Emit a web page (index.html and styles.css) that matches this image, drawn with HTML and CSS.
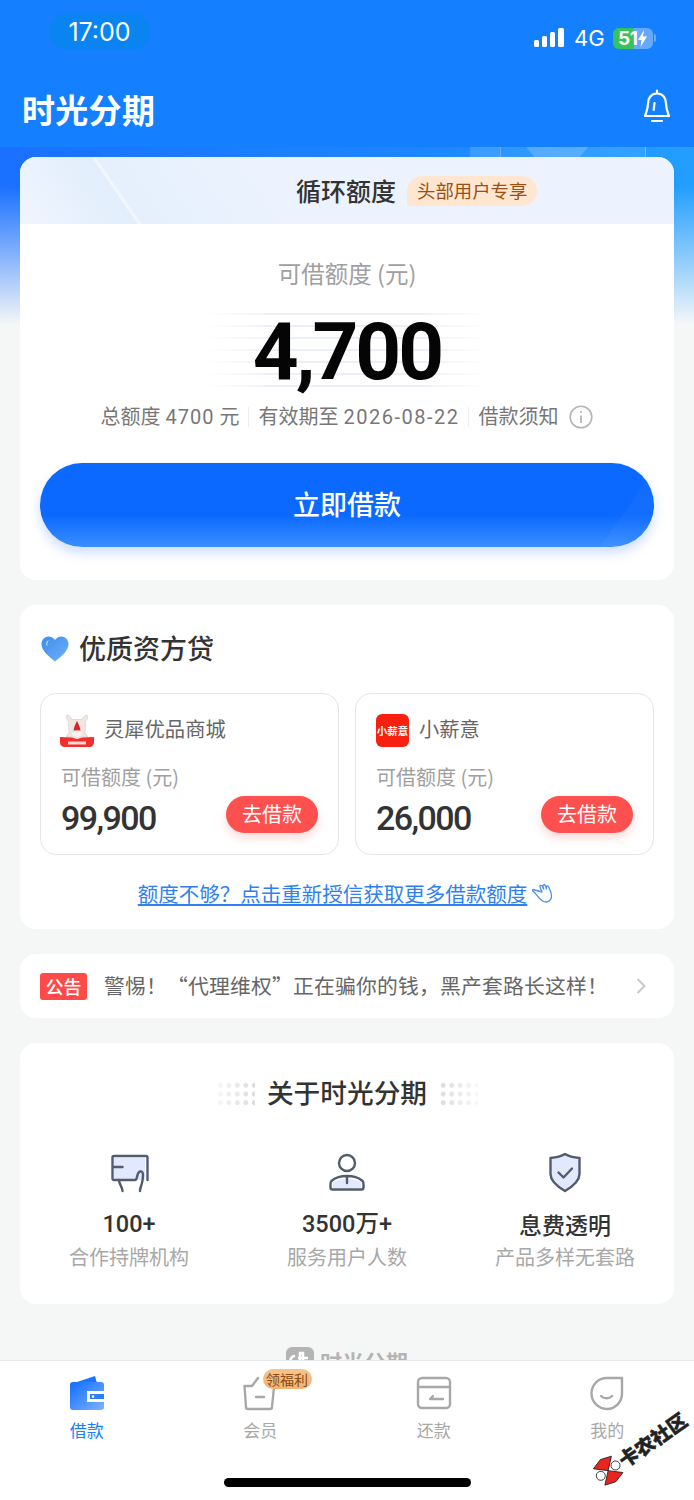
FILE: index.html
```html
<!DOCTYPE html>
<html lang="zh-CN">
<head>
<meta charset="utf-8">
<title>时光分期</title>
<link rel="stylesheet" href="styles.css">
</head>
<body>
<div class="page">
  <div class="backdrop">
    <svg class="backdrop-art" width="180" height="12" viewBox="0 0 180 12"><rect x="0" width="30" height="12" fill="#fff" opacity=".14"/><rect x="30" width="1" height="12" fill="#fff" opacity=".3"/><rect x="31" width="145" height="12" fill="#fff" opacity=".08"/><path d="M56 0h62l-10 12H66z" fill="#fff" opacity=".18"/><rect x="175" width="1" height="12" fill="#fff" opacity=".3"/></svg>
  </div>
  <header class="header">
    <div class="status">
      <div class="time">17:00</div>
      <div class="status-right">
        <svg class="signal" width="30" height="20" viewBox="0 0 30 20"><rect x="0" y="12" width="5" height="7" rx="1.5"/><rect x="8" y="8" width="5" height="11" rx="1.5"/><rect x="16" y="4" width="5" height="15" rx="1.5"/><rect x="24" y="0" width="6" height="19" rx="1.5"/></svg>
        <span class="net">4G</span>
        <div class="battery"><span class="battery-num">51</span><svg class="bolt" width="11" height="17" viewBox="0 0 11 17"><path d="M7 0 1 10h3.500L3.500 17 10 6.500H6z" fill="#fff"/></svg></div>
        <span class="battery-cap"></span>
      </div>
    </div>
    <div class="titlebar">
      <div class="brand">时光分期</div>
      <svg class="bell" width="30" height="34" viewBox="0 0 30 34" fill="none" stroke="#fff" stroke-width="2.200" stroke-linecap="round" stroke-linejoin="round"><path d="M15 1.500v3M15 4.500c-6 0-9 4.500-9 10 0 5-1.500 8-3 12.500h24c-1.500-4.500-3-7.500-3-12.500 0-5.500-3-10-9-10z"/><path d="M10 32h10M12.500 14l-.8 7"/></svg>
    </div>
  </header>

  <main class="main">
    <section class="card quota">
      <div class="quota-head">
        <h2 class="quota-title">循环额度</h2>
        <span class="quota-tag">头部用户专享</span>
      </div>
      <div class="quota-body">
        <div class="quota-label">可借额度 (元)</div>
        <div class="amount"><span class="amount-num">4,700</span></div>
        <div class="meta">
          <span>总额度 <b class="num num-a">4700</b> 元</span><i class="sep"></i><span>有效期至 <b class="num num-b">2026-08-22</b></span><i class="sep"></i><span>借款须知</span>
          <svg class="info" width="24" height="24" viewBox="0 0 24 24" fill="none" stroke="#b5b5b5"><circle cx="12" cy="12" r="10.800" stroke-width="1.600"/><path d="M12 10.500V18" stroke-width="1.800"/><circle cx="12" cy="7" r="1.100" fill="#b5b5b5" stroke="none"/></svg>
        </div>
        <button class="cta">立即借款</button>
      </div>
    </section>

    <section class="card funds">
      <h2 class="funds-title">
        <svg width="28" height="26" viewBox="0 0 28 26"><defs><linearGradient id="hg" x1="0" y1="0" x2="1" y2="1"><stop offset="0" stop-color="#3d8df0"/><stop offset="1" stop-color="#6fb0f5"/></linearGradient></defs><path d="M14 25.500C9 21 .5 15.500.5 8 .5 3.500 4 .5 7.500.5c2.800 0 5 1.300 6.500 3.500C15.500 1.800 17.700.5 20.500.5 24 .5 27.500 3.500 27.500 8c0 7.500-8.500 13-13.500 17.500z" fill="url(#hg)"/><path d="M8 4C5.500 5 4.500 8 6.500 10.500 5.800 8 6.200 5.500 8 4z" fill="#fff"/></svg>
        <span>优质资方贷</span>
      </h2>
      <div class="offers">
        <article class="offer">
          <div class="offer-name">
            <svg class="logo" width="34" height="34" viewBox="0 0 34 34"><path d="M7 2c2 0 4 2 5 4.500h10C23 4 25 2 27 2c1 2 .5 5-2 7 .8 4 .5 8-.5 11 2 1 3 2.500 3 4H6.500c0-1.500 1-3 3-4-1-3-1.300-7-.5-11C6.500 7 6 4 7 2z" fill="#efe7e0" stroke="#d4c8bf" stroke-width=".6"/><path d="M17 8c1.500 3 3 6 3.500 9.500h-7C14 14 15.500 11 17 8z" fill="#d8232a"/><ellipse cx="17" cy="21" rx="6" ry="3.200" fill="#f9f3ee" stroke="#ddd2ca" stroke-width=".5"/><path d="M0 24c4 0 8 .5 12 .5l5 1.500 5-1.500c4 0 8-.5 12-.5v5.500a4.500 4.500 0 0 1-4.500 4.500h-25A4.500 4.500 0 0 1 0 29.500z" fill="#f1302c"/><rect x="8" y="28.500" width="18" height="3" fill="#fff" opacity=".8"/></svg>
            <span>灵犀优品商城</span>
          </div>
          <div class="offer-label">可借额度 (元)</div>
          <div class="offer-row"><span class="offer-value">99,900</span><button class="go">去借款</button></div>
        </article>
        <article class="offer">
          <div class="offer-name">
            <div class="logo logo-red">小薪意</div>
            <span>小薪意</span>
          </div>
          <div class="offer-label">可借额度 (元)</div>
          <div class="offer-row"><span class="offer-value">26,000</span><button class="go">去借款</button></div>
        </article>
      </div>
      <div class="more">
        <a class="more-link">额度不够&#xFF1F;点击重新授信获取更多借款额度</a>
        <svg width="24" height="20" viewBox="0 0 24 20" fill="none" stroke="#4a90f0" stroke-width="1.300" stroke-linecap="round" stroke-linejoin="round"><path d="M1 6.500l9 2.500-2-5c-.6-1.500 1.500-2.300 2.300-.8l1.500 3-.8-3c-.3-1.500 1.700-2 2.300-.6l1.300 3.400-.3-2c0-1.400 1.800-1.500 2.300-.2l1.700 4c1.200 3 2 6 .3 8.500-1.500 2.500-5 3.500-7.500 2-2-1.200-5-4.500-7-7L2 9c-1.300-.6-2-1.800-1-2.500z"/></svg>
      </div>
    </section>

    <section class="card notice">
      <span class="notice-tag">公告</span>
      <p class="notice-text">警惕&#xFF01;“代理维权”正在骗你的钱&#xFF0C;黑产套路长这样&#xFF01;</p>
      <svg width="11" height="18" viewBox="0 0 11 18" fill="none" stroke="#c9c9c9" stroke-width="2"><path d="M1.500 2l7 7-7 7"/></svg>
    </section>

    <section class="card about">
      <div class="about-head">
        <i class="dots dots-l"></i>
        <h2 class="about-title">关于时光分期</h2>
        <i class="dots dots-r"></i>
      </div>
      <div class="stats">
        <div class="stat">
          <svg width="42" height="42" viewBox="0 0 42 42" fill="none" stroke="#525c6c" stroke-width="2.400" stroke-linecap="round" stroke-linejoin="round"><rect x="6" y="6" width="31" height="22" fill="#e2e8fd" stroke="none"/><path d="M4.500 15V5.500a1.500 1.500 0 0 1 1.500-1.500h32a1.500 1.500 0 0 1 1.500 1.500V28M4.500 15h10M4.500 15v11.500A1.500 1.500 0 0 0 6 28h21c1 0 1.500-.5 2-3 .5-2.500 1-5 3-5.500 2-.5 3 1 3 3.500 0 3-.5 6-1 8-.7 3-2 5-2 8"/><path d="M11 28c0 4 3 6 3.500 11"/></svg>
          <div class="stat-value">100+</div>
          <div class="stat-label">合作持牌机构</div>
        </div>
        <div class="stat">
          <svg width="42" height="42" viewBox="0 0 42 42" fill="none" stroke="#525c6c" stroke-width="2.400" stroke-linecap="round" stroke-linejoin="round"><path d="M7 30c3-1.500 7-3 14-3s11 1.500 14 3v6H7z" fill="#e2e8fd" stroke="none"/><ellipse cx="21" cy="11" rx="8" ry="8"/><path d="M21 24c-6 0-12 2-15 4.500-1.300 1-1.500 2-1.500 3.500v3.500a2 2 0 0 0 2 2h29a2 2 0 0 0 2-2V32c0-1.500-.2-2.500-1.500-3.500C33 26 27 24 21 24zM21 24v7"/></svg>
          <div class="stat-value">3500万+</div>
          <div class="stat-label">服务用户人数</div>
        </div>
        <div class="stat">
          <svg width="42" height="42" viewBox="0 0 42 42" fill="none" stroke="#525c6c" stroke-width="2.400" stroke-linecap="round" stroke-linejoin="round"><path d="M21 2c4 2.500 9 3.500 14.500 4v16c0 7-6 12-14.500 17C12.500 34 6.500 29 6.500 22V6C12 5.500 17 4.500 21 2z" fill="#e2e8fd"/><path d="M14.500 20.500l5 5 8.500-9"/></svg>
          <div class="stat-value stat-value-cjk">息费透明</div>
          <div class="stat-label">产品多样无套路</div>
        </div>
      </div>
    </section>

    <div class="foot-brand">
      <svg width="28" height="28" viewBox="0 0 28 28"><rect width="28" height="28" rx="6" fill="#b4b4b4"/><path d="M9 9c-3 0-5 3-5 6s2 6 5 6 5-3 5-6V6h3v14M12 11h10" fill="none" stroke="#fff" stroke-width="2.500"/></svg>
      <span>时光分期</span>
    </div>
  </main>

  <nav class="tabbar">
    <div class="tab tab-active">
      <svg width="36" height="36" viewBox="0 0 36 36"><defs><linearGradient id="wg" x1="0" y1="0" x2="1" y2="1"><stop offset="0" stop-color="#0f6dff"/><stop offset="1" stop-color="#7db2ff"/></linearGradient></defs><path d="M2 9 26 1l2 7z" fill="#1a76ff"/><rect x="1" y="7" width="34" height="28" rx="3" fill="url(#wg)"/><rect x="18" y="16" width="17" height="11" fill="#fff"/><rect x="21" y="19" width="14" height="5" fill="#2a7fff"/><circle cx="24" cy="21.500" r="1.300" fill="#fff"/></svg>
      <span>借款</span>
    </div>
    <div class="tab">
      <svg width="36" height="36" viewBox="0 0 36 36" fill="none" stroke="#a8a8a8" stroke-width="2.400" stroke-linecap="round" stroke-linejoin="round"><path d="M2.500 11 4 32a2 2 0 0 0 2 2h22a2 2 0 0 0 2-2l2-20M2.500 11H10l6-8M14 22h8"/></svg>
      <span>会员</span>
      <em class="badge">领福利</em>
    </div>
    <div class="tab">
      <svg width="36" height="36" viewBox="0 0 36 36" fill="none" stroke="#a8a8a8" stroke-width="2.400" stroke-linecap="round" stroke-linejoin="round"><rect x="2" y="3" width="32" height="30" rx="4"/><path d="M2 12h32M17 21l-3 3h13"/></svg>
      <span>还款</span>
    </div>
    <div class="tab">
      <svg width="36" height="36" viewBox="0 0 36 36" fill="none" stroke="#a8a8a8" stroke-width="2.400" stroke-linecap="round" stroke-linejoin="round"><path d="M33 3H18C9 3 2.500 10 2.500 18.500S9.500 34 18 34s15-7 15-15.500z"/><path d="M12 21c3 3 8 3 11 0"/></svg>
      <span>我的</span>
    </div>
  </nav>
  <div class="home-bar"></div>
  <div class="watermark">
    <svg width="28" height="28" viewBox="0 0 28 28" stroke="#222" stroke-width=".8"><circle cx="5" cy="14" r="4.500" fill="#fff"/><circle cx="23" cy="14" r="4.500" fill="#fff"/><path d="M14 14 3 4 14 .5 25 4z" fill="#e8261f"/><path d="M14 14 3 24l11 3.500L25 24z" fill="#e8261f"/></svg>
    <span>卡农社区</span>
  </div>
</div>
</body>
</html>
```
FILE: styles.css
```css
* { box-sizing: border-box; margin: 0; padding: 0; }
html, body { width: 694px; height: 1500px; overflow: hidden; }
body { font-family: "Noto Sans CJK SC", sans-serif; color: #333; background: #f5f7f7; }
.page { position: relative; width: 694px; height: 1500px; overflow: hidden; background: #f5f7f7; }
i, em { font-style: normal; }
b { font-weight: 400; }
button { border: 0; font-family: inherit; }

.backdrop { position: absolute; left: 0; right: 0; top: 147px; height: 178px;
  background: linear-gradient(180deg, rgba(245,247,248,0) 0%, rgba(245,247,248,0) 22%, rgba(245,247,248,.5) 62%, #f5f7f7 100%), linear-gradient(90deg, #1a70ff 0%, #1c86ff 60%, #229fff 100%); }
.backdrop-art { position: absolute; left: 470px; top: 0; }

.header { position: relative; height: 147px; background: #1580ff; }
.status { display: flex; justify-content: space-between; align-items: flex-start; padding: 13px 38px 0 49px; height: 84px; }
.time { width: 101px; height: 37px; border-radius: 19px; background: #0a84f0; color: #fff; font: 400 25px/38px Inter, Roboto, sans-serif; text-align: center; }
.status-right { display: flex; align-items: center; margin-top: 14px; height: 22px; }
.signal { fill: #fff; margin-right: 10px; }
.net { color: #fff; font: 400 22px/22px Inter, Roboto, sans-serif; width: 39px; }
.battery { position: relative; display: flex; align-items: center; width: 40px; height: 21px; border-radius: 6px; background: linear-gradient(90deg, #35c35f 0 53%, #66a8fa 53%); }
.battery-num { color: #fff; font: 700 19px/21px Inter, Roboto, sans-serif; margin-left: 5px; letter-spacing: -.5px; }
.battery-cap { width: 2px; height: 8px; margin-left: 1px; border-radius: 0 2px 2px 0; background: #66a8fa; }
.titlebar { display: flex; justify-content: space-between; align-items: center; padding: 0 22px; height: 46px; }
.brand { color: #fff; font-size: 33px; font-weight: 700; line-height: 46px; letter-spacing: .3px; padding-top: 3px; }
.bell { margin-top: -2px; }

.main { position: relative; padding: 10px 20px 0; display: flex; flex-direction: column; gap: 25px; }
.card { background: #fff; border-radius: 16px; }

.quota { height: 423px; overflow: hidden; }
.quota-head { height: 67px; display: flex; align-items: center; gap: 11px; padding-left: 276px;
  background: linear-gradient(55.500deg, #eff5fe 0, #e2eefc 96px, #f4f8fe 98.500px, #e6f0fd 101px, #e8f1fd 160px, #ecf3fe 240px); }
.quota-title { font-size: 25px; font-weight: 500; line-height: 34px; color: #333; white-space: nowrap; padding-bottom: 2px; }
.quota-tag { height: 30px; padding: 0 10px 2px; border-radius: 15px 15px 15px 0; background: #fee6d0; color: #9a5014; font-size: 18.400px; line-height: 28px; white-space: nowrap; }
.quota-body { padding: 34px 20px 33px; text-align: center; }
.quota-label { font-size: 23.500px; line-height: 30px; height: 32px; color: #a0a0a0; }
.amount { position: relative; margin-top: 21px; height: 80px; text-align: center; }
.amount::before { content: ""; position: absolute; left: 165px; width: 284px; top: 2px; height: 74px;
  background: repeating-linear-gradient(180deg, #eceff7 0 2px, transparent 2px 12px);
  -webkit-mask-image: linear-gradient(90deg, transparent, #000 25%, #000 75%, transparent);
  mask-image: linear-gradient(90deg, transparent, #000 25%, #000 75%, transparent); }
.amount-num { position: relative; top: 1px; font: 700 80px/80px Roboto, sans-serif; color: #050505; letter-spacing: -3px; }
.meta { display: flex; align-items: center; justify-content: center; margin-top: 12px; height: 28px; font-family: Roboto, "Noto Sans CJK SC", sans-serif; font-size: 20px; line-height: 28px; color: #777; white-space: nowrap; }
.num-a { letter-spacing: 1px; }
.num-b { letter-spacing: 1.500px; }
.sep { width: 1px; height: 20px; background: #eee; margin: 0 9px; }
.info { margin-left: 11px; }
.cta { display: block; width: 100%; height: 84px; margin-top: 32px; padding-bottom: 4px; border-radius: 42px; color: #fff; font-size: 27px; font-weight: 500; background: linear-gradient(125deg, transparent 92%, rgba(255,255,255,.03) 92%), linear-gradient(180deg, #0b69ff 0 62%, #3a8eff 100%); box-shadow: 0 6px 12px rgba(30,105,255,.22); }

.funds { padding: 28px 20px 22px; }
.funds-title { display: flex; align-items: center; gap: 10px; height: 32px; font-size: 27px; font-weight: 500; line-height: 32px; color: #333; margin-left: 1px; }
.funds-title span { margin-top: -2px; }
.offers { display: grid; grid-template-columns: 299px 299px; gap: 16px; margin-top: 28px; }
.offer { height: 162px; padding: 19px 20px 0 19px; border: 1px solid #e6e6e6; border-radius: 16px; }
.offer-name { display: flex; align-items: center; gap: 10px; height: 34px; font-size: 20.300px; color: #666; }
.offer-name span { margin-top: -5px; }
.logo { flex: none; }
.logo-red { width: 33px; height: 33px; margin-left: 1px; border-radius: 6px; background: #f8200e; color: #fff; font-size: 10.500px; font-weight: 700; line-height: 33px; text-align: center; white-space: nowrap; }
.offer-label { margin: 16px 0 0 1px; font-size: 20px; line-height: 28px; color: #a0a0a0; }
.offer-row { display: flex; justify-content: space-between; align-items: center; margin-top: 5px; height: 37px; }
.offer-value { font: 500 34px/44px Roboto, sans-serif; color: #333; letter-spacing: -1.600px; margin: 7px 0 0 1px; }
.go { width: 92px; height: 37px; padding-bottom: 2px; border-radius: 19px; background: #ff5050; color: #fff; font-size: 20px; line-height: 35px; box-shadow: 0 5px 10px rgba(255,80,80,.22); }
.more { display: flex; align-items: center; justify-content: center; gap: 5px; margin-top: 24px; height: 28px; }
.more-link { font-size: 20.500px; line-height: 28px; color: #2f80f0; text-decoration: underline; white-space: nowrap; }

.notice { display: flex; align-items: center; justify-content: space-between; height: 64px; padding: 0 27px 0 20px; }
.notice-tag { flex: none; width: 47px; height: 27px; border-radius: 3px; background: #ff4a4a; color: #fff; font-size: 18px; font-weight: 500; line-height: 26px; text-align: center; }
.notice-text { flex: none; width: 520px; margin-left: 17px; margin-right: auto; font-size: 20.800px; letter-spacing: .2px; line-height: 28px; height: 30px; color: #666; white-space: nowrap; }

.about { padding: 33px 0; }
.about-head { display: flex; align-items: center; justify-content: center; gap: 12px; height: 36px; }
.about-title { font-size: 26.700px; font-weight: 500; line-height: 32px; height: 36px; color: #333; }
.dots { width: 39px; height: 26px; background: radial-gradient(circle at center, #dcdcdc 2.200px, transparent 2.700px) 0 0 / 8.500px 8.700px; }
.dots-l { -webkit-mask-image: linear-gradient(90deg, rgba(0,0,0,.2), #000); mask-image: linear-gradient(90deg, rgba(0,0,0,.2), #000); }
.dots-r { -webkit-mask-image: linear-gradient(90deg, #000, rgba(0,0,0,.2)); mask-image: linear-gradient(90deg, #000, rgba(0,0,0,.2)); }
.stats { display: grid; grid-template-columns: repeat(3, 218px); margin-top: 40px; }
.stat { display: flex; flex-direction: column; align-items: center; }
.stat-value { margin-top: 15px; font-family: Roboto, "Noto Sans CJK SC", sans-serif; font-size: 23.500px; font-weight: 500; line-height: 30px; color: #333; }
.stat-value-cjk { font-family: "Noto Sans CJK SC", sans-serif; font-size: 23px; }
.stat-label { margin-top: 4px; font-size: 20px; line-height: 28px; color: #a8a8a8; }

.foot-brand { display: flex; align-items: center; justify-content: center; gap: 6px; margin-top: 18px; height: 28px; color: #b4b4b4; font-size: 22px; font-weight: 700; }

.tabbar { position: absolute; left: 0; right: 0; top: 1360px; height: 140px; display: grid; grid-template-columns: repeat(4, 1fr); background: #fff; border-top: 1px solid #e8e9ea; }
.tab { position: relative; display: flex; flex-direction: column; align-items: center; padding-top: 14px; color: #a8a8a8; font-size: 17px; line-height: 24px; }
.tab span { margin-top: 7px; }
.tab-active { color: #1680ff; }
.badge { position: absolute; left: 89px; top: 8px; width: 49px; height: 20px; border-radius: 10px; background: linear-gradient(180deg, #f6c48c, #eeb474); color: #8a4a10; font-size: 14px; line-height: 20px; text-align: center; white-space: nowrap; }
.home-bar { position: absolute; left: 224px; top: 1478px; width: 247px; height: 9px; border-radius: 5px; background: #000; }
.watermark { position: absolute; left: 587px; top: 1434px; display: flex; align-items: center; gap: 1px; transform: rotate(-35deg); color: #222; font-size: 19.500px; font-weight: 900; line-height: 26px; white-space: nowrap; -webkit-text-stroke: .4px #222; }
```
